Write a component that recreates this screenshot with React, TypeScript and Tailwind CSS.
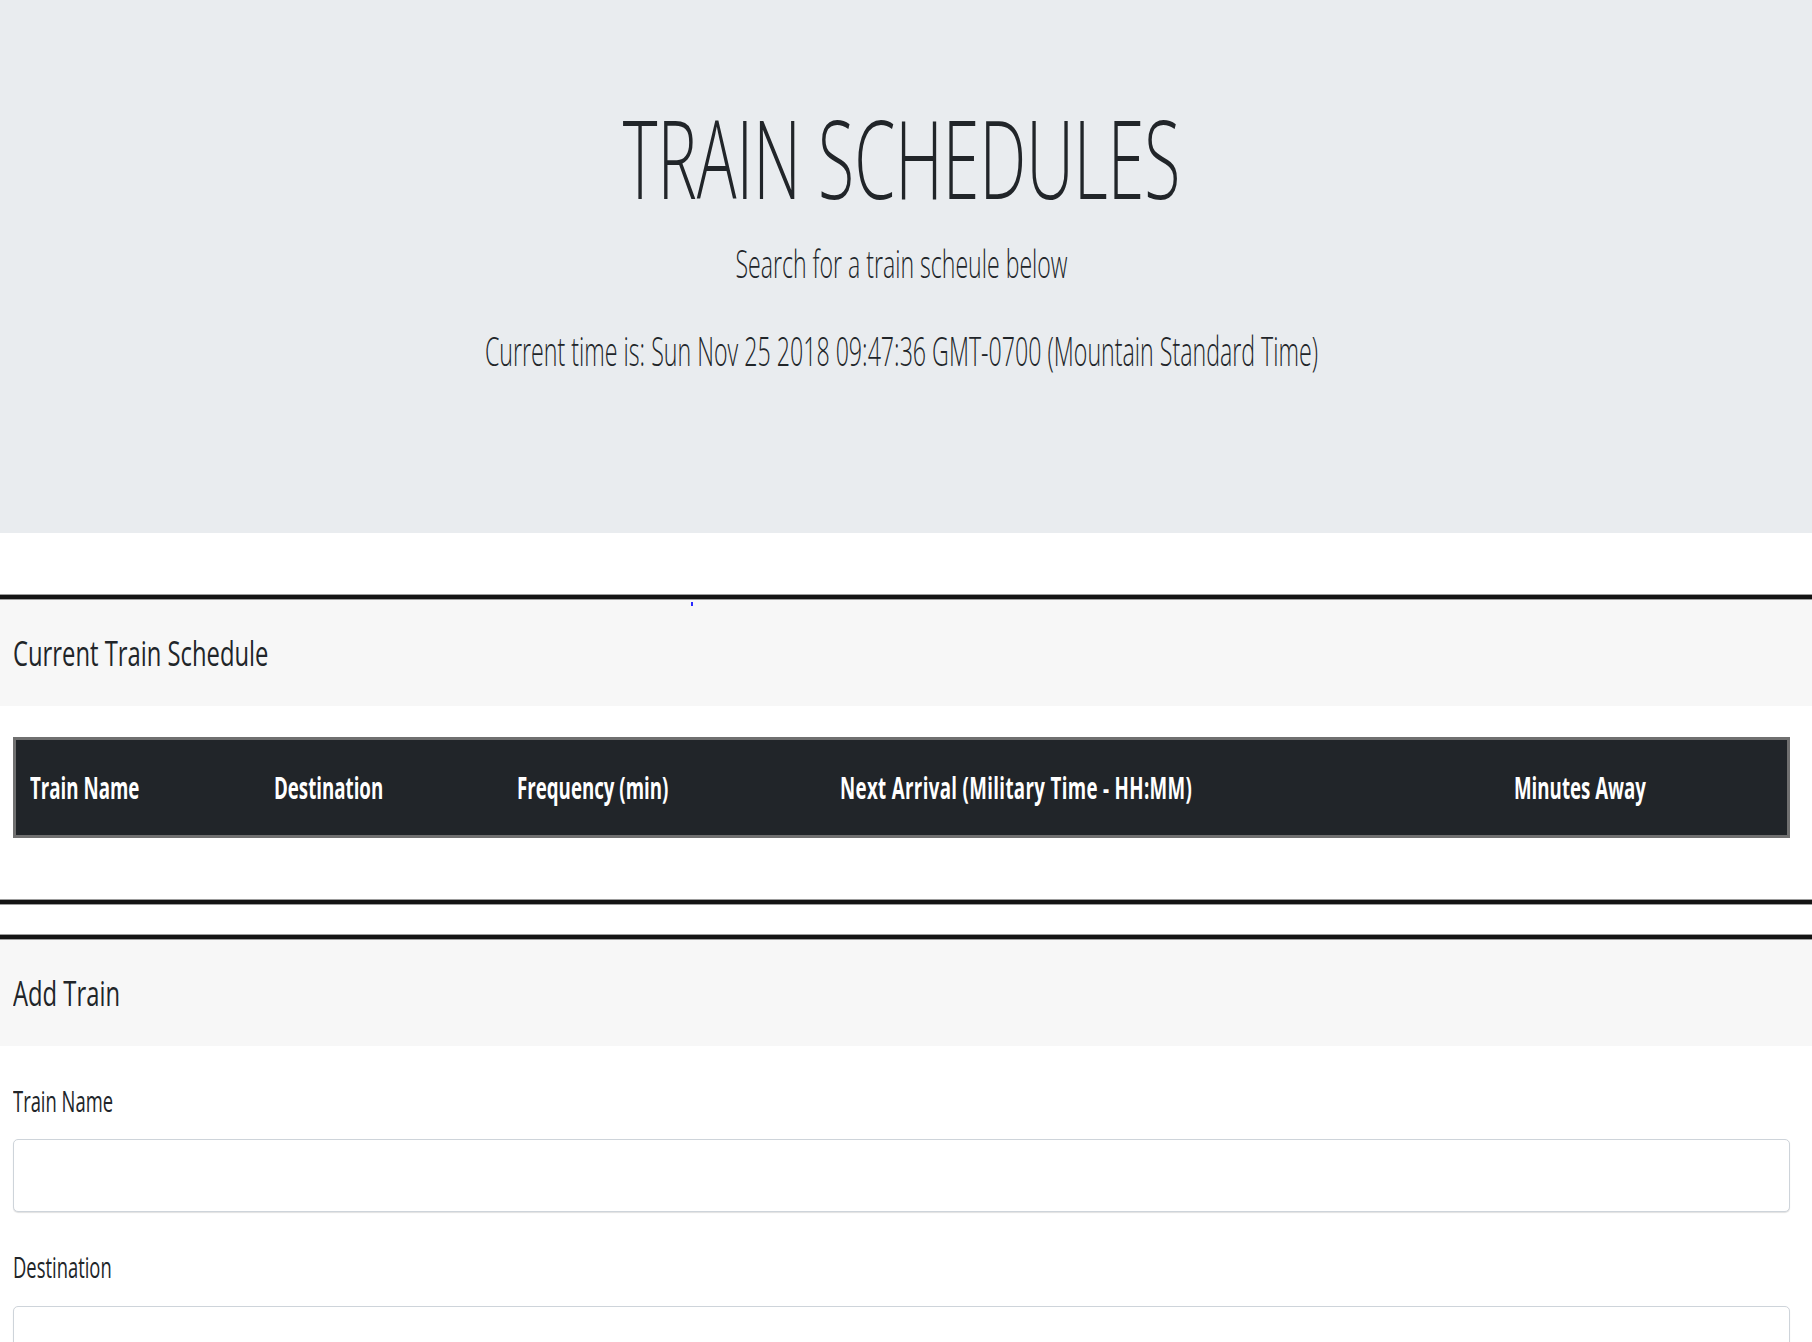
import React from 'react';

const Rule = () => <div className="h-[6px] border-y border-[#9c9c9c] bg-[#141414]" />;

const SectionHeader = ({ title }: { title: string }) => (
  <div className="relative flex h-[106px] items-center bg-[#f7f7f7] px-[13px] pt-[4px]">
    <h5 className="scale-y-[1.42] origin-center text-[23.8px] leading-none font-normal text-[#212529]">{title}</h5>
  </div>
);

const Field = ({ label }: { label: string }) => (
  <div className="pr-[22px] pl-[13px]">
    <label className="mt-[46px] mb-[29px] block w-fit scale-y-[1.54] text-[18.4px] leading-none text-[#212529]">{label}</label>
    <input type="text" className="block h-[73px] w-full rounded-[5px] border border-[#ced4da] bg-white shadow-[0_1px_1px_rgba(0,0,0,0.12)] outline-none" />
  </div>
);

const columns = [
  { label: 'Train Name', cls: '' },
  { label: 'Destination', cls: '' },
  { label: 'Frequency (min)', cls: '' },
  { label: 'Next Arrival (Military Time - HH:MM)', cls: 'tracking-[0.35px]' },
  { label: 'Minutes Away', cls: '' },
];

export default function App() {
  return (
    <div className="min-h-screen bg-white font-['Open_Sans',sans-serif] text-[#212529]">
      <header className="flex h-[533px] flex-col items-center bg-[#e9ecef] pt-[123px] pr-[22px] pl-[13px]">
        <h1 className="scale-y-[1.644] text-[66.2px] leading-none font-light">TRAIN SCHEDULES</h1>
        <p className="mt-[63px] scale-y-[1.7] text-[23.1px] leading-none font-light">Search for a train scheule below</p>
        <p className="mt-[64px] scale-y-[1.78] text-[23.2px] leading-none font-light">
          Current time is: Sun Nov 25 2018 09:47:36 GMT-0700 (Mountain Standard Time)
        </p>
      </header>

      <div className="h-[61px]" />
      <Rule />
      <div className="relative">
        <SectionHeader title="Current Train Schedule" />
        <span className="absolute top-[2px] left-[691px] h-[4px] w-[2px] bg-[#2a2aff]" />
      </div>

      <div className="pt-[31px] pr-[22px] pl-[13px]">
        <div className="h-[101px] border-[3px] border-[#707070] bg-[#212529]">
          <div className="grid h-full grid-cols-[244px_243px_323px_674px_1fr] items-center pt-[2px] pl-[14px]">
            {columns.map((c) => (
              <div key={c.label} className={`w-fit scale-y-[1.65] text-[18.7px] leading-none font-bold text-white ${c.cls}`}>
                {c.label}
              </div>
            ))}
          </div>
        </div>
      </div>

      <div className="h-[61px]" />
      <Rule />
      <div className="h-[29px]" />
      <Rule />
      <SectionHeader title="Add Train" />

      <Field label="Train Name" />
      <Field label="Destination" />
    </div>
  );
}
